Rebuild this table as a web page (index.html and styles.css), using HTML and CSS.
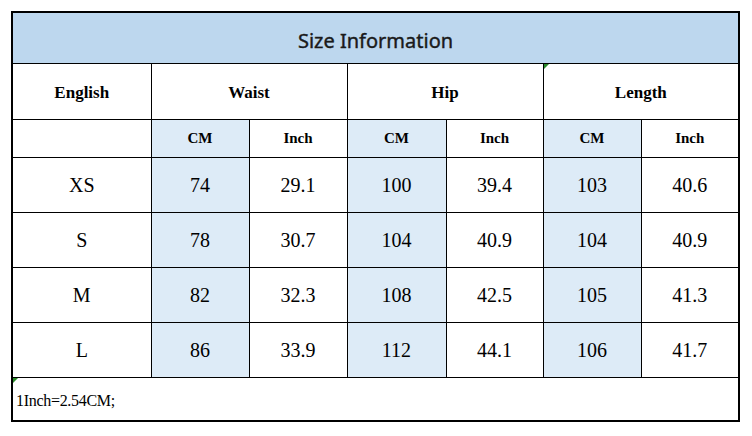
FILE: index.html
```html
<!DOCTYPE html>
<html lang="en">
<head>
<meta charset="utf-8">
<title>Size Information</title>
<link rel="stylesheet" href="styles.css">
</head>
<body>
<div class="sheet">
  <table class="size-table">
    <colgroup>
      <col class="c-eng">
      <col class="c-98">
      <col class="c-98">
      <col class="c-99">
      <col class="c-97">
      <col class="c-98">
      <col class="c-97">
    </colgroup>
    <tr class="r-title">
      <td colspan="7" class="title">Size Information</td>
    </tr>
    <tr class="r-head">
      <th>English</th>
      <th colspan="2">Waist</th>
      <th colspan="2">Hip</th>
      <th colspan="2" class="flag">Length<span class="tri"></span></th>
    </tr>
    <tr class="r-sub">
      <th></th>
      <th class="blue">CM</th>
      <th>Inch</th>
      <th class="blue">CM</th>
      <th>Inch</th>
      <th class="blue">CM</th>
      <th>Inch</th>
    </tr>
    <tr class="r-data">
      <td>XS</td><td class="blue">74</td><td>29.1</td><td class="blue">100</td><td>39.4</td><td class="blue">103</td><td>40.6</td>
    </tr>
    <tr class="r-data">
      <td>S</td><td class="blue">78</td><td>30.7</td><td class="blue">104</td><td>40.9</td><td class="blue">104</td><td>40.9</td>
    </tr>
    <tr class="r-data">
      <td>M</td><td class="blue">82</td><td>32.3</td><td class="blue">108</td><td>42.5</td><td class="blue">105</td><td>41.3</td>
    </tr>
    <tr class="r-data">
      <td>L</td><td class="blue">86</td><td>33.9</td><td class="blue">112</td><td>44.1</td><td class="blue">106</td><td>41.7</td>
    </tr>
    <tr class="r-foot">
      <td colspan="7" class="note flag">1Inch=2.54CM;<span class="tri"></span></td>
    </tr>
  </table>
</div>
</body>
</html>
```
FILE: styles.css
```css
html, body {
  margin: 0;
  padding: 0;
  background: #ffffff;
}

.sheet {
  margin: 11px 0 0 11px;
  width: 725px;
  border: 2px solid #000000;
}

.size-table {
  width: 725px;
  border-collapse: collapse;
  border-style: hidden;
  table-layout: fixed;
  font-family: "Liberation Serif", "Times New Roman", serif;
  color: #000000;
}

.c-eng { width: 138px; }
.c-98 { width: 98px; }
.c-99 { width: 99px; }
.c-97 { width: 97px; }

.size-table td,
.size-table th {
  border: 1px solid #000000;
  padding: 0;
  text-align: center;
  vertical-align: middle;
}

.r-title { height: 50px; }
.r-head { height: 56px; }
.r-sub { height: 38px; }
.r-data { height: 55px; }
.r-foot { height: 43px; }

.size-table .title {
  background: #bdd7ee;
  font-family: "Noto Sans", "Open Sans", sans-serif;
  font-size: 20px;
  color: #1a1a1a;
  -webkit-text-stroke: 0.4px #1a1a1a;
  padding-top: 5px;
}

.r-head th {
  font-size: 17px;
  font-weight: bold;
  padding-top: 3px;
}

.r-sub th {
  font-size: 15px;
  font-weight: bold;
  padding-top: 1px;
}

.r-data td {
  font-size: 20px;
  padding-top: 2px;
}

.size-table .blue {
  background: #ddebf7;
}

.size-table .note {
  text-align: left;
  font-size: 16px;
  letter-spacing: -0.3px;
  padding: 5px 0 0 3px;
}

.flag {
  position: relative;
}

.tri {
  position: absolute;
  left: 0;
  top: 0;
  width: 0;
  height: 0;
  border-top: 5px solid #2a8a2a;
  border-right: 5px solid transparent;
}
```
